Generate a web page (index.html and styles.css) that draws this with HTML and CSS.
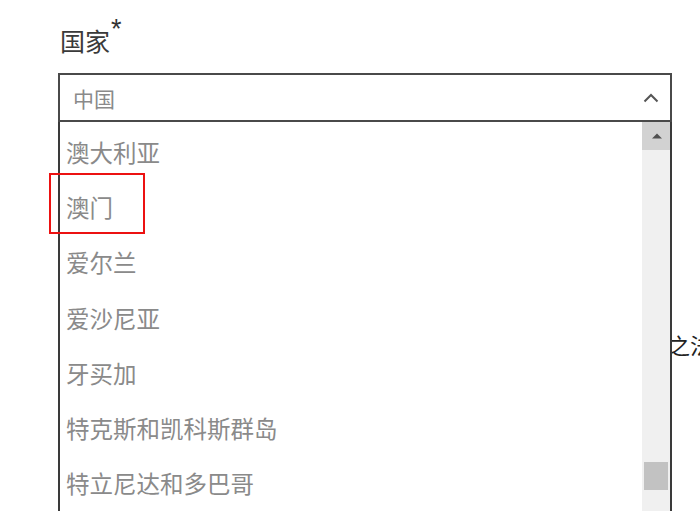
FILE: index.html
```html
<!DOCTYPE html>
<html lang="zh-CN">
<head>
<meta charset="utf-8">
<title>国家</title>
<link rel="stylesheet" href="styles.css">
</head>
<body>
<h2 class="label">国家<sup class="req">*</sup></h2>
<div class="combo">
  <div class="select">
    <span class="value">中国</span>
    <svg class="chev" width="16" height="10" viewBox="0 0 16 10"><path d="M1.5 8.5 L8 2 L14.5 8.5" fill="none" stroke="#555" stroke-width="2"/></svg>
  </div>
  <div class="dropdown">
    <ul class="list">
      <li>澳大利亚</li>
      <li>澳门</li>
      <li>爱尔兰</li>
      <li>爱沙尼亚</li>
      <li>牙买加</li>
      <li>特克斯和凯科斯群岛</li>
      <li>特立尼达和多巴哥</li>
    </ul>
    <div class="scrollbar">
      <div class="sb-up"><svg width="10" height="6" viewBox="0 0 10 6"><path d="M0 5.5 L5 0.5 L10 5.5 Z" fill="#505050"/></svg></div>
      <div class="sb-track"><div class="sb-thumb"></div></div>
    </div>
  </div>
  <div class="highlight"></div>
</div>
<p class="behind">之法</p>
</body>
</html>
```
FILE: styles.css
```css
html, body {
  margin: 0;
  padding: 0;
  background: #fff;
  overflow: hidden;
}
body {
  font-family: "Noto Sans CJK SC", "Noto Sans", sans-serif;
  width: 700px;
  height: 511px;
}
.label {
  margin: 0;
  padding: 22px 0 0 60px;
  font-size: 25px;
  line-height: 36px;
  font-weight: 400;
  color: #3a3a3a;
}
.req {
  font-size: 27px;
  position: relative;
  top: -6px;
  vertical-align: top;
  line-height: 27px;
  margin-left: 1px;
  font-family: "Liberation Sans", sans-serif;
  font-weight: 400;
  color: #333;
}
.combo {
  position: relative;
  margin: 15px 0 0 58px;
  width: 614px;
}
.select {
  box-sizing: border-box;
  width: 614px;
  height: 49px;
  border: 2px solid #4a4a4a;
  display: flex;
  align-items: center;
  justify-content: space-between;
  padding: 0 11px 0 13px;
  background: #fff;
}
.value {
  font-size: 21px;
  color: #8a8a8a;
  line-height: 30px;
}
.chev {
  display: block;
}
.dropdown {
  position: absolute;
  top: 49px;
  left: 0;
  width: 614px;
  height: 400px;
  box-sizing: border-box;
  border-left: 2px solid #3a3a3a;
  border-right: 2px solid #3a3a3a;
  background: #fff;
  display: flex;
  z-index: 2;
}
.list {
  list-style: none;
  margin: 0;
  padding: 3px 0 0 6px;
  flex: 1;
}
.list li {
  height: 55.2px;
  line-height: 55.2px;
  font-size: 23.5px;
  color: #8a8a8a;
  white-space: nowrap;
}
.scrollbar {
  width: 28px;
  background: #f0f0f0;
  display: flex;
  flex-direction: column;
}
.sb-up {
  height: 28px;
  background: #d2d2d2;
  display: flex;
  align-items: center;
  justify-content: center;
}
.sb-up svg {
  display: block;
  margin-left: 2px;
}
.sb-track {
  padding: 312px 2px 0 2px;
}
.sb-thumb {
  height: 28px;
  background: #c2c2c2;
}
.highlight {
  position: absolute;
  left: -9px;
  top: 100px;
  width: 96px;
  height: 61px;
  box-sizing: border-box;
  border: 2px solid #ec1111;
  z-index: 3;
}
.behind {
  margin: 207px 0 0 0;
  padding-left: 668px;
  font-size: 22px;
  line-height: 30px;
  color: #222;
  white-space: nowrap;
}
```
